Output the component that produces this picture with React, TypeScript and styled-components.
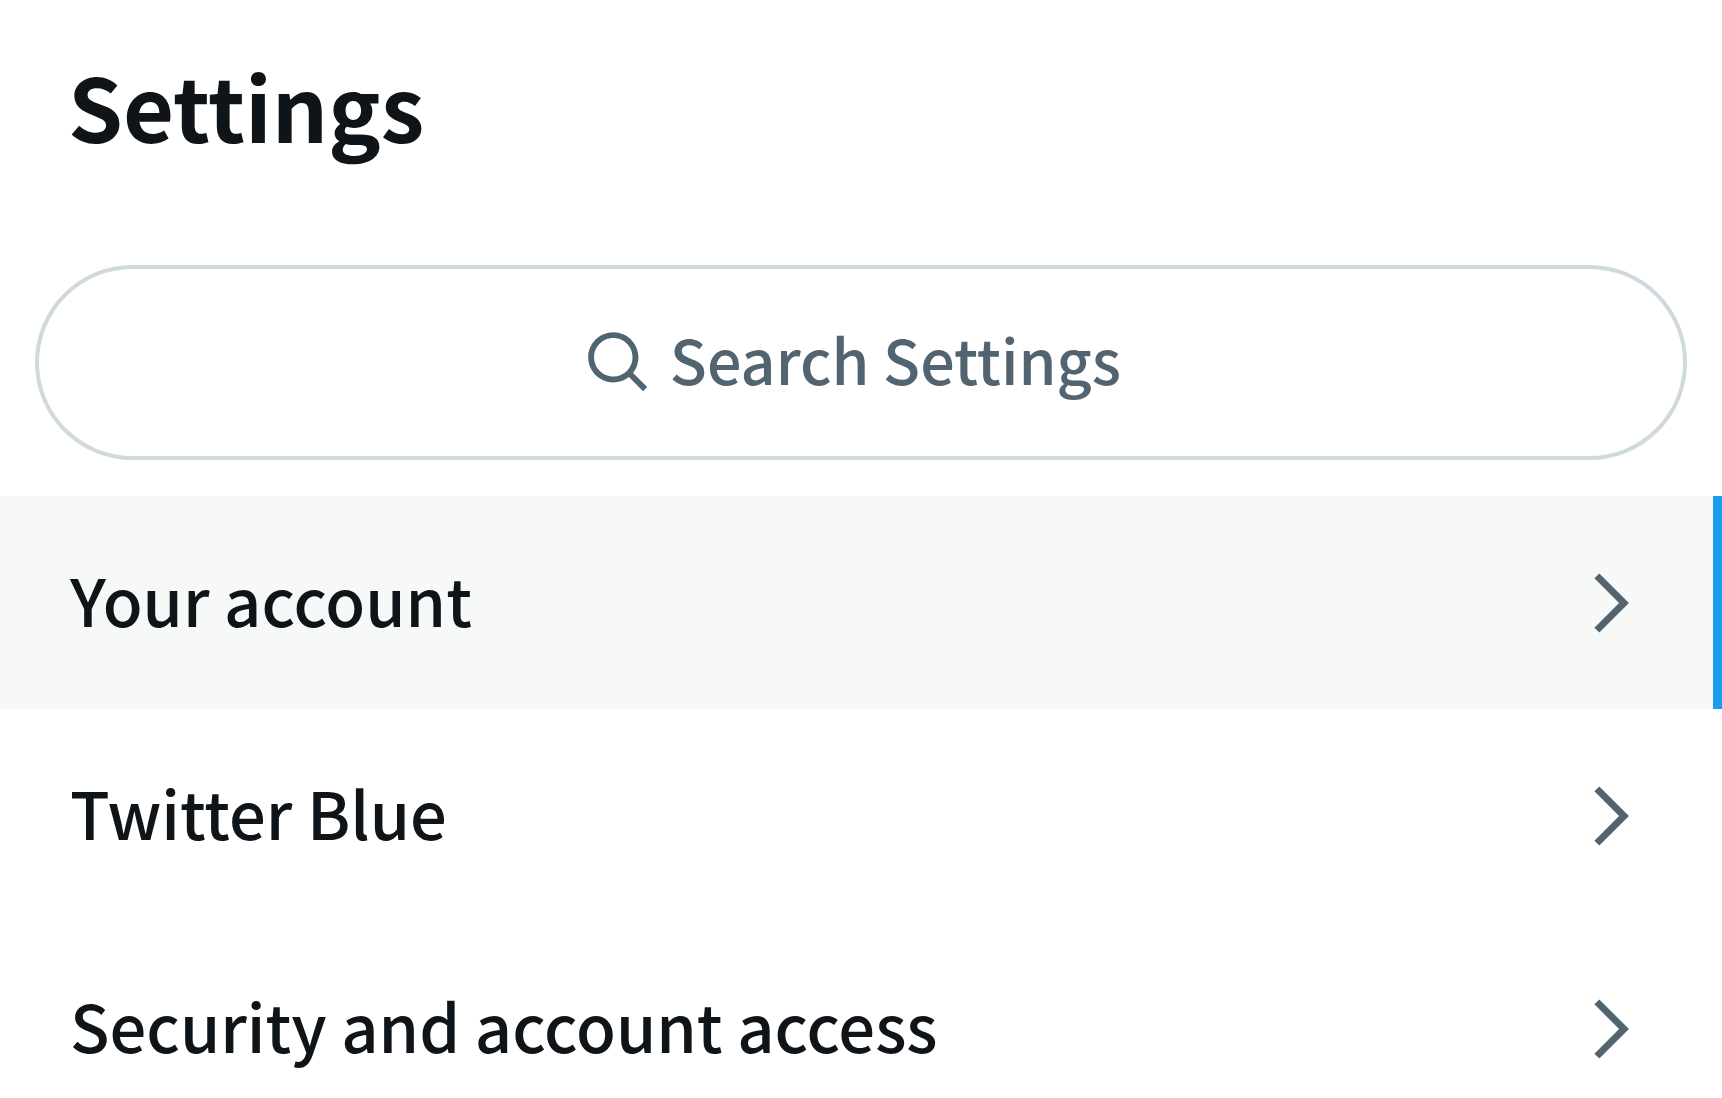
import React from "react";
import styled, { createGlobalStyle } from "styled-components";

const GlobalStyle = createGlobalStyle`
  *, *::before, *::after { box-sizing: border-box; }
  html, body { margin: 0; background: #ffffff; }
  body {
    color: #0f1419;
    font-family: "Noto Sans CJK SC", "Open Sans", sans-serif;
    font-weight: 500;
  }
`;

const Page = styled.main`
  height: 100vh;
  overflow-y: auto;
  scrollbar-width: none;
`;

const Header = styled.header`
  padding: 41px 68px 60px;
`;

const Title = styled.h1`
  margin: 0;
  font-size: 88px;
  font-weight: 700;
  line-height: 128px;
`;

const SearchForm = styled.form`
  padding: 36px 35px;
`;

const SearchBox = styled.label`
  display: flex;
  align-items: center;
  justify-content: center;
  gap: 16px;
  height: 195px;
  padding-right: 18px;
  border: 4px solid #cfd9de;
  border-radius: 98px;
  color: #536471;
  cursor: text;
`;

const SearchIcon = styled.svg`
  flex: none;
  width: 71px;
  height: 71px;
  fill: currentColor;
`;

const SearchInput = styled.input`
  field-sizing: content;
  padding: 0 0 8px;
  border: 0;
  outline: 0;
  background: transparent;
  color: inherit;
  font-family: inherit;
  font-size: 61px;
  font-weight: inherit;
  line-height: 90px;

  &::placeholder {
    color: #536471;
    opacity: 1;
  }
`;

const List = styled.ul`
  margin: 0;
  padding: 0;
  list-style: none;
`;

const RowLink = styled.a<{ $active: boolean }>`
  display: flex;
  align-items: center;
  justify-content: space-between;
  min-height: 213px;
  padding: 0 70px;
  color: inherit;
  text-decoration: none;
  background: ${({ $active }) => ($active ? "#f7f9f9" : "transparent")};
  box-shadow: ${({ $active }) => ($active ? "inset -9px 0 #1d9bf0" : "none")};
`;

const RowLabel = styled.span`
  padding-bottom: 8px;
  font-size: 65px;
  line-height: 90px;
`;

const Chevron = styled.svg`
  flex: none;
  width: 84px;
  height: 84px;
  fill: #536471;
`;

const items = [
  { label: "Your account", href: "#account", active: true },
  { label: "Twitter Blue", href: "#twitter-blue", active: false },
  { label: "Security and account access", href: "#security", active: false },
];

export default function App() {
  return (
    <Page>
      <GlobalStyle />
      <Header>
        <Title>Settings</Title>
      </Header>
      <SearchForm role="search">
        <SearchBox>
          <SearchIcon viewBox="0 0 24 24" aria-hidden="true">
            <path d="M10.25 3.75c-3.59 0-6.5 2.91-6.5 6.5s2.91 6.5 6.5 6.5c1.795 0 3.419-.726 4.596-1.904 1.178-1.177 1.904-2.801 1.904-4.596 0-3.59-2.91-6.5-6.5-6.5zm-8.5 6.5c0-4.694 3.806-8.5 8.5-8.5s8.5 3.806 8.5 8.5c0 1.986-.682 3.815-1.824 5.262l4.781 4.781-1.414 1.414-4.781-4.781c-1.447 1.142-3.276 1.824-5.262 1.824-4.694 0-8.5-3.806-8.5-8.5z" />
          </SearchIcon>
          <SearchInput type="text" placeholder="Search Settings" aria-label="Search Settings" />
        </SearchBox>
      </SearchForm>
      <nav aria-label="Settings">
        <List>
          {items.map((item) => (
            <li key={item.label}>
              <RowLink
                href={item.href}
                $active={item.active}
                aria-current={item.active ? "page" : undefined}
              >
                <RowLabel>{item.label}</RowLabel>
                <Chevron viewBox="0 0 24 24" aria-hidden="true">
                  <path d="M14.586 12L7.543 4.96l1.414-1.42L17.414 12l-8.457 8.46-1.414-1.42L14.586 12z" />
                </Chevron>
              </RowLink>
            </li>
          ))}
        </List>
      </nav>
    </Page>
  );
}
